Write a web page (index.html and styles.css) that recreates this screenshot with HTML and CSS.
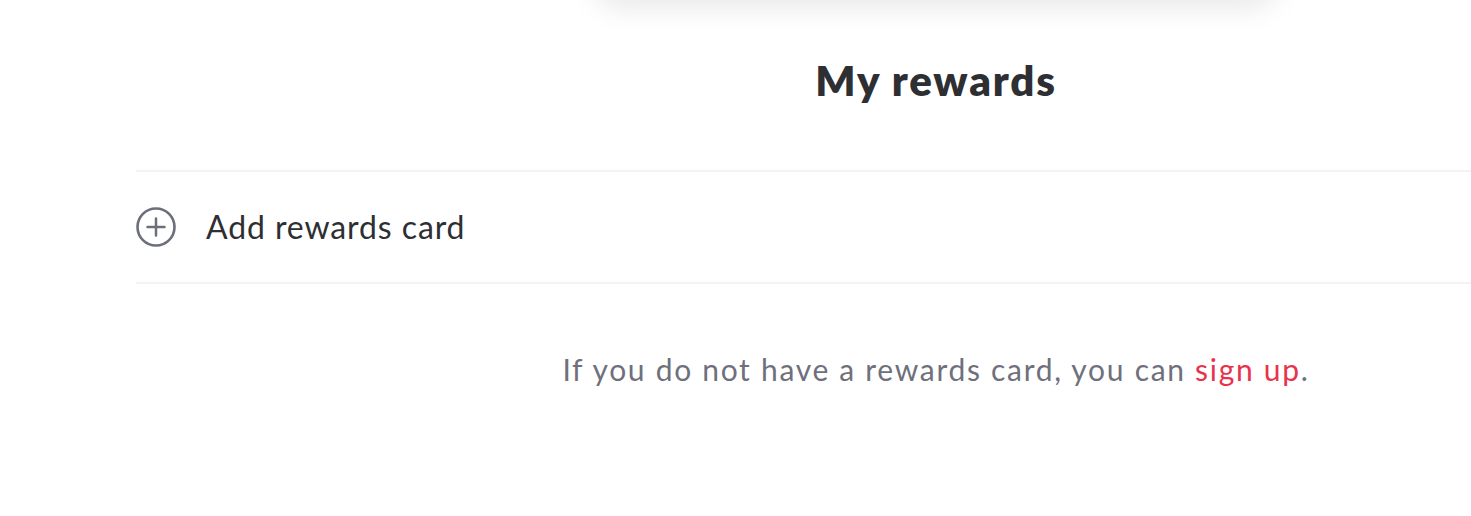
FILE: index.html
```html
<!DOCTYPE html>
<html lang="en">
<head>
<meta charset="utf-8">
<title>My rewards</title>
<link rel="stylesheet" href="styles.css">
</head>
<body>
<div class="page">
  <div class="top-card"></div>
  <h1 class="title">My rewards</h1>
  <div class="add-row">
    <svg class="add-icon" width="40" height="40" viewBox="0 0 40 40" aria-hidden="true">
      <circle cx="20" cy="20" r="18.5" fill="none" stroke="#6c6f7b" stroke-width="2.6"/>
      <path d="M20 11.5v17M11.5 20h17" stroke="#6c6f7b" stroke-width="2.5" stroke-linecap="round"/>
    </svg>
    <span class="add-label">Add rewards card</span>
  </div>
  <p class="note">If you do not have a rewards card, you can <a class="link" href="#">sign up</a>.</p>
</div>
</body>
</html>
```
FILE: styles.css
```css
html, body {
  margin: 0;
  padding: 0;
  background: #ffffff;
  overflow: hidden;
}
body {
  font-family: Lato, "Noto Sans", sans-serif;
  color: #2e2f33;
  width: 1471px;
  height: 516px;
}
.page {
  width: 1600px;
  margin-left: 136px;
  display: flex;
  flex-direction: column;
}
.top-card {
  align-self: center;
  width: 680px;
  height: 40px;
  margin-top: -40px;
  background: #ffffff;
  border-radius: 20px;
  box-shadow: 0 6px 30px rgba(0, 0, 0, 0.1);
}
.title {
  margin: 52px 0 0;
  text-align: center;
  font-size: 42px;
  font-weight: 800;
  letter-spacing: 1.8px;
  line-height: 56px;
  color: #2e2f33;
  height: 118px;
}
.add-row {
  display: flex;
  align-items: center;
  gap: 30px;
  height: 110px;
  border-top: 2px solid #f3f3f3;
  border-bottom: 2px solid #f3f3f3;
}
.add-icon {
  flex: none;
}
.add-label {
  font-size: 32px;
  letter-spacing: 0.9px;
  color: #2e2f33;
  padding-bottom: 2px;
}
.note {
  margin: 67px 0 0;
  text-align: center;
  font-size: 30px;
  letter-spacing: 1.7px;
  color: #6e707c;
}
.link {
  color: #e9334d;
  text-decoration: none;
}
```
